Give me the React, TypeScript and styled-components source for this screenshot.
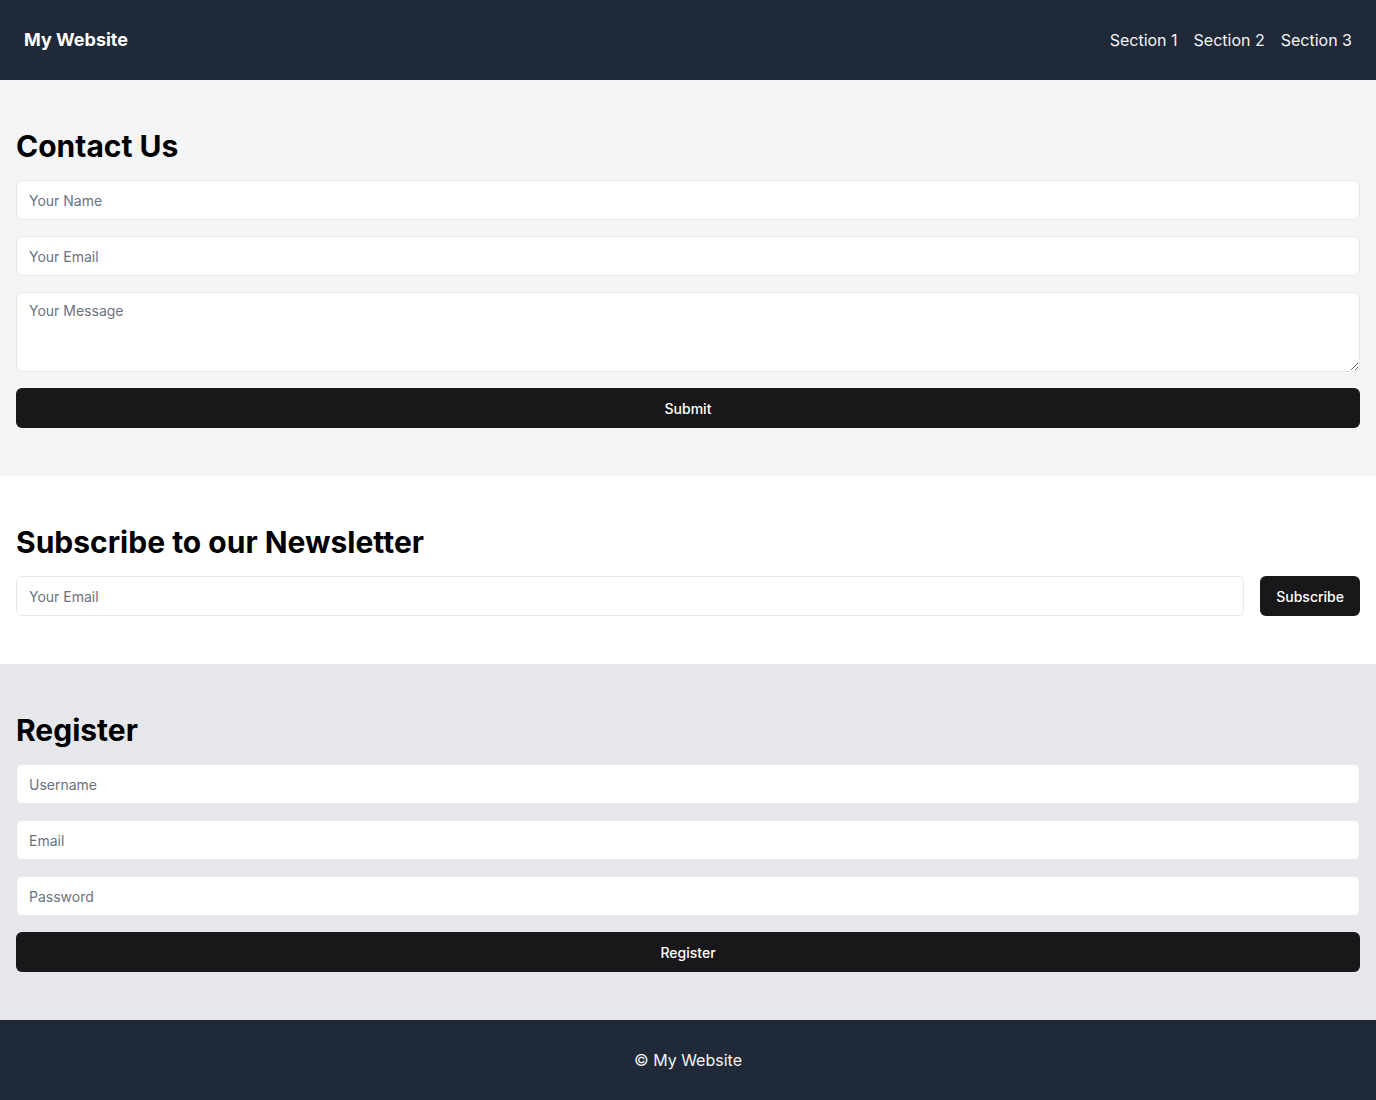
import styled, { createGlobalStyle } from "styled-components";

const dark = "#1f2937";
const ink = "#18181b";
const line = "#e5e7eb";

const GlobalStyle = createGlobalStyle`
  * { box-sizing: border-box; }
  body {
    margin: 0;
    font-family: Inter, "Noto Sans", Arial, sans-serif;
    color: #000;
    background: #fff;
  }
`;

const Header = styled.header`
  height: 80px;
  padding: 0 24px;
  background: ${dark};
  color: #fff;
  display: flex;
  align-items: center;
  justify-content: space-between;
`;

const Brand = styled.h1`
  margin: 0;
  font-size: 18px;
  font-weight: 700;
  line-height: 28px;
`;

const Nav = styled.nav`
  display: flex;
  gap: 16px;
  font-size: 16px;
  line-height: 24px;
  a {
    color: #f3f4f6;
    text-decoration: none;
  }
`;

const Section = styled.section<{ $bg: string }>`
  background: ${(p) => p.$bg};
  padding: 48px 16px;
`;

const Title = styled.h2`
  margin: 0 0 16px;
  font-size: 30px;
  line-height: 36px;
  font-weight: 700;
`;

const Form = styled.form`
  display: flex;
  flex-direction: column;
  gap: 16px;
`;

const Row = styled.form`
  display: flex;
  gap: 16px;
  input {
    flex: 1;
    min-width: 0;
  }
`;

const fieldCss = `
  width: 100%;
  display: block;
  margin: 0;
  padding: 0 12px;
  border: 1px solid ${line};
  border-radius: 6px;
  background: #fff;
  font-family: inherit;
  font-size: 14px;
  color: #111827;
  outline: none;
  &::placeholder { color: #6b7280; }
`;

const Input = styled.input`
  ${fieldCss}
  height: 40px;
  flex-shrink: 0;
`;

const TextArea = styled.textarea`
  ${fieldCss}
  height: 80px;
  flex-shrink: 0;
  padding-top: 8px;
  line-height: 20px;
  resize: vertical;
`;

const Button = styled.button<{ $wide?: boolean }>`
  height: 40px;
  padding: 0 16px;
  width: ${(p) => (p.$wide ? "100%" : "auto")};
  flex-shrink: 0;
  border: none;
  border-radius: 6px;
  background: ${ink};
  color: #fff;
  font-family: inherit;
  font-size: 14px;
  font-weight: 500;
  cursor: pointer;
`;

const Footer = styled.footer`
  height: 80px;
  background: ${dark};
  color: #f3f4f6;
  display: flex;
  align-items: center;
  justify-content: center;
  font-size: 16px;
`;

const App = () => {
  const stop = (e: React.FormEvent) => e.preventDefault();

  return (
    <>
      <GlobalStyle />
      <Header>
        <Brand>My Website</Brand>
        <Nav>
          <a href="#section1">Section 1</a>
          <a href="#section2">Section 2</a>
          <a href="#section3">Section 3</a>
        </Nav>
      </Header>

      <Section $bg="#f3f4f6" id="section1">
        <Title>Contact Us</Title>
        <Form onSubmit={stop}>
          <Input placeholder="Your Name" />
          <Input type="email" placeholder="Your Email" />
          <TextArea placeholder="Your Message" />
          <Button $wide>Submit</Button>
        </Form>
      </Section>

      <Section $bg="#fff" id="section2">
        <Title>Subscribe to our Newsletter</Title>
        <Row onSubmit={stop}>
          <Input type="email" placeholder="Your Email" />
          <Button>Subscribe</Button>
        </Row>
      </Section>

      <Section $bg="#e5e7eb" id="section3">
        <Title>Register</Title>
        <Form onSubmit={stop}>
          <Input placeholder="Username" />
          <Input type="email" placeholder="Email" />
          <Input type="password" placeholder="Password" />
          <Button $wide>Register</Button>
        </Form>
      </Section>

      <Footer>© My Website</Footer>
    </>
  );
};

export default App;
